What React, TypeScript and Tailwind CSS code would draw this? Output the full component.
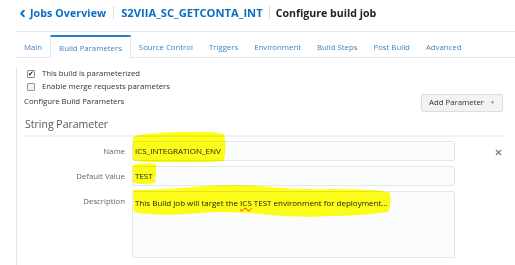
import type { ReactNode } from "react";
import { ChevronLeft, X } from "lucide-react";

const tabs = ["Main", "Build Parameters", "Source Control", "Triggers", "Environment", "Build Steps", "Post Build", "Advanced"];

const Field = ({ label, value, tall }: { label: string; value: ReactNode; tall?: boolean }) => (
  <div className="flex items-start">
    <div className="w-[108px] shrink-0 text-right pr-[7px] text-[7.8px] text-[#666] leading-[20px]">{label}</div>
    <div
      className={`w-[323px] border border-[#e3e6ea] rounded-[2px] bg-[#fbfcfd] px-[2px] text-[8px] text-[#222] whitespace-nowrap ${tall ? "h-[67px] pt-[5px] leading-[12px]" : "h-[20px] leading-[18px]"}`}
    >
      {value}
    </div>
  </div>
);

export default function App() {
  return (
    <div className="relative w-[515px] h-[265px] bg-white overflow-hidden" style={{ fontFamily: '"Open Sans", "Noto Sans", sans-serif' }}>
      {/* header */}
      <div className="ml-[16px] h-[32px] border-b border-[#e6e9ed] flex items-start pt-[5px] font-bold whitespace-nowrap">
        <ChevronLeft className="w-[11px] h-[11px] text-[#0b6cc4] mt-[3px] ml-[1px] mr-[2px]" strokeWidth={4} />
        <span className="text-[#0b6cc4] text-[10.6px] leading-[16px] tracking-[0.1px]">Jobs Overview</span>
        <span className="mx-[7px] h-[13px] mt-[1px] border-l border-[#d8dde2]" />
        <span className="text-[#0b6cc4] text-[11.2px] leading-[16px]">S2VIIA_SC_GETCONTA_INT</span>
        <span className="mx-[6px] h-[13px] mt-[1px] border-l border-[#d8dde2]" />
        <span className="text-[#222] text-[10.6px] leading-[16px]">Configure build job</span>
      </div>

      {/* tabs */}
      <div className="ml-[16px] mt-[3px] flex h-[23px] text-[7.8px] text-[#3f84c8] whitespace-nowrap">
        {tabs.map((t) =>
          t === "Build Parameters" ? (
            <div key={t} className="px-[8px] flex items-center pt-[2px] border-t-[2px] border-t-[#1f80d4] border-x border-x-[#e3e6ea] bg-white">
              {t}
            </div>
          ) : (
            <div key={t} className="px-[8px] flex items-center pt-[4px] border-b border-[#e3e6ea]">
              {t}
            </div>
          )
        )}
        <div className="flex-1 border-b border-[#e3e6ea]" />
      </div>

      {/* panel */}
      <div className="ml-[16px] border-l border-[#e3e6ea] h-[220px] pl-[7px] pr-[12px] text-[7.8px] text-[#333] whitespace-nowrap">
        <div className="mt-[9px] flex items-center h-[13px] pl-[3px]">
          <span className="w-[8px] h-[8px] border border-[#8a8a8a] rounded-[1px] flex items-center justify-center text-[7px] leading-none mr-[7px] text-[#222]">✔</span>
          This build is parameterized
        </div>
        <div className="flex items-center h-[14px] pl-[3px]">
          <span className="w-[8px] h-[8px] border border-[#9a9a9a] rounded-[1px] bg-[#f3f3f3] mr-[7px]" />
          Enable merge requests parameters
        </div>
        <div className="flex items-start justify-between h-[20px]">
          <span className="leading-[14px]">Configure Build Parameters</span>
          <div className="w-[82px] h-[18px] border border-[#d8dde2] bg-[#f1f3f5] rounded-[2px] flex items-center justify-center text-[7.8px] text-[#333]">
            Add Parameter <span className="ml-[6px] text-[5px] text-[#888]">▼</span>
          </div>
        </div>
        <div className="pl-[1px] text-[10.5px] text-[#555] h-[21px] leading-[21px]">String Parameter</div>
        <div className="h-[2px] bg-[#eef0f2]" />
        <div className="mt-[4px] flex flex-col gap-[5px] relative">
          <Field label="Name" value="ICS_INTEGRATION_ENV" />
          <Field label="Default Value" value="TEST" />
          <Field
            label="Description"
            tall
            value={
              <>
                This Build job will target the{" "}
                <span className="underline decoration-wavy decoration-red-500 decoration-[0.5px]">ICS</span> TEST environment for deployment...
              </>
            }
          />
          <X className="absolute right-[0px] top-[7px] w-[9px] h-[9px] text-[#777]" strokeWidth={3} />
        </div>
      </div>

      {/* highlighter marks */}
      <svg className="absolute left-0 top-0 pointer-events-none mix-blend-multiply" width="515" height="265">
        <path d="M133 137 Q140 133 180 132 Q215 131 224 134 Q227 148 224 161 Q200 163 170 162 Q140 163 133 160 Z" fill="#ffff1a" />
        <path d="M133 165 Q145 162 156 164 Q157 174 155 183 Q144 185 133 183 Z" fill="#ffff1a" />
        <path d="M133 190 Q150 190 180 188 Q230 183 260 186 Q300 190 330 189 Q380 189 390 193 Q392 205 388 212 Q360 216 330 216 Q300 218 260 214 Q220 210 190 214 Q150 216 134 212 Z" fill="#ffff1a" />
      </svg>
    </div>
  );
}
